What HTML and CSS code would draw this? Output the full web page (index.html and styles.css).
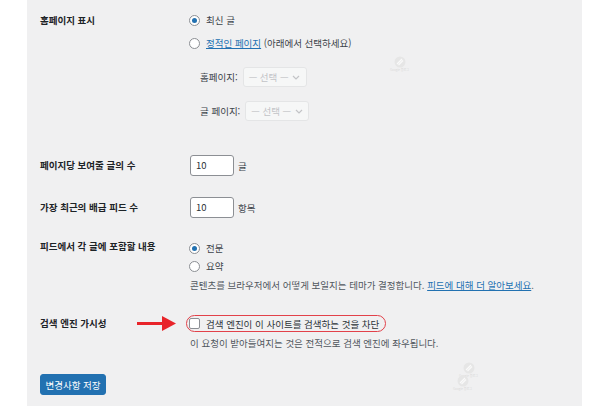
FILE: index.html
```html
<!DOCTYPE html>
<html lang="ko">
<head>
    <meta charset="UTF-8">
    <title>읽기 설정</title>
    <link rel="stylesheet" href="styles.css">
</head>
<body>

  <div class="panel">

    <div class="form-row">
      <div class="row-label">홈페이지 표시</div>
      <div class="row-field">
        <label class="choice"><span class="radio checked"></span>최신 글</label>
        <label class="choice choice-second"><span class="radio"></span><a href="#">정적인 페이지</a>&nbsp;(아래에서 선택하세요)</label>
        <ul class="page-select">
          <li>
            <span>홈페이지:</span>
            <span class="select">— 선택 —
              <svg width="8" height="5" viewBox="0 0 8 5"><path d="M1 1 L4 4 L7 1" fill="none" stroke="#c3c4c7" stroke-width="1.2"/></svg>
            </span>
          </li>
          <li>
            <span>글 페이지:</span>
            <span class="select">— 선택 —
              <svg width="8" height="5" viewBox="0 0 8 5"><path d="M1 1 L4 4 L7 1" fill="none" stroke="#c3c4c7" stroke-width="1.2"/></svg>
            </span>
          </li>
        </ul>
      </div>
    </div>

    <div class="form-row row-number">
      <div class="row-label">페이지당 보여줄 글의 수</div>
      <div class="row-field inline">
        <span class="number-input">10</span>
        <span class="unit">글</span>
      </div>
    </div>

    <div class="form-row row-number row-feed">
      <div class="row-label">가장 최근의 배급 피드 수</div>
      <div class="row-field inline">
        <span class="number-input">10</span>
        <span class="unit">항목</span>
      </div>
    </div>

    <div class="form-row row-content">
      <div class="row-label">피드에서 각 글에 포함할 내용</div>
      <div class="row-field">
        <label class="choice"><span class="radio checked"></span>전문</label>
        <label class="choice"><span class="radio"></span>요약</label>
        <p class="description">콘텐츠를 브라우저에서 어떻게 보일지는 테마가 결정합니다. <a href="#">피드에 대해 더 알아보세요</a>.</p>
      </div>
    </div>

    <div class="form-row row-search">
      <div class="row-label">검색 엔진 가시성</div>
      <svg class="arrow" width="40" height="17" viewBox="0 0 40 17">
        <rect x="0" y="7" width="28" height="3" fill="#e8242a"/>
        <polygon points="25,1 39,8.5 25,16" fill="#e8242a"/>
      </svg>
      <div class="row-field">
        <label class="check-wrap"><span class="checkbox"></span>검색 엔진이 이 사이트를 검색하는 것을 차단</label>
        <p class="description desc-search">이 요청이 받아들여지는 것은 전적으로 검색 엔진에 좌우됩니다.</p>
      </div>
    </div>

    <button class="save-btn">변경사항 저장</button>

    <div class="watermark wm-top">
      <svg width="12" height="12" viewBox="0 0 12 12"><circle cx="6" cy="6" r="5.5" fill="#e6e6e6"/><path d="M3 8 L8 3 M4.5 9 L9 4.5" stroke="#fafafa" stroke-width="1.2"/></svg>
      <span>Google 블로그</span>
    </div>
    <div class="watermark wm-bottom">
      <svg width="12" height="12" viewBox="0 0 12 12"><circle cx="6" cy="6" r="5.5" fill="#e6e6e6"/><path d="M3 8 L8 3 M4.5 9 L9 4.5" stroke="#fafafa" stroke-width="1.2"/></svg>
      <span>Google 블로그</span>
    </div>
    <div class="watermark wm-bottom2">
      <svg width="12" height="12" viewBox="0 0 12 12"><circle cx="6" cy="6" r="5.5" fill="#e6e6e6"/><path d="M3 8 L8 3 M4.5 9 L9 4.5" stroke="#fafafa" stroke-width="1.2"/></svg>
      <span>Google 블로그</span>
    </div>

  </div>

</body>
</html>
```

FILE: styles.css
```css
body {
    margin: 0;
    background-color: #fff;
    font-family: "Noto Sans CJK KR", "Noto Sans", sans-serif;
    font-size: 9.5px;
    color: #3c434a;
}

.panel {
    position: relative;
    box-sizing: border-box;
    margin-left: 27px;
    width: 555px;
    height: 406px;
    padding: 10px 0 0 13px;
    background-color: #f0f0f1;
}

a {
    color: #2271b1;
    text-decoration: underline;
}

.form-row {
    display: flex;
}

.row-label {
    width: 150px;
    flex-shrink: 0;
    font-weight: bold;
    color: #1d2327;
    line-height: 20px;
}

.row-field {
    flex: 1;
}

.choice {
    display: flex;
    align-items: center;
    height: 20px;
}

.choice-second {
    margin-top: 3px;
}

.radio {
    box-sizing: border-box;
    width: 11px;
    height: 11px;
    margin: 0 6px 0 -1px;
    border: 1px solid #8c8f94;
    border-radius: 50%;
    background-color: #fff;
    display: flex;
    align-items: center;
    justify-content: center;
}

.radio.checked::after {
    content: "";
    width: 5px;
    height: 5px;
    border-radius: 50%;
    background-color: #2271b1;
}

.page-select {
    list-style: none;
    margin: 14px 0 0;
    padding: 0 0 0 10px;
}

.page-select li {
    display: flex;
    align-items: center;
    gap: 5px;
    height: 20px;
}

.page-select li + li {
    margin-top: 14px;
}

.select {
    box-sizing: border-box;
    display: flex;
    align-items: center;
    gap: 4px;
    width: 64px;
    height: 20px;
    padding: 0 5px;
    border: 1px solid #e4e5e6;
    border-radius: 3px;
    background-color: #f6f7f7;
    color: #c3c4c7;
    white-space: nowrap;
}

.row-number {
    margin-top: 34px;
}

.row-number .row-label {
    line-height: 21px;
}

.row-feed {
    margin-top: 21px;
}

.inline {
    display: flex;
    align-items: center;
}

.number-input {
    box-sizing: border-box;
    width: 44px;
    height: 21px;
    padding-left: 5px;
    line-height: 19px;
    border: 1px solid #8c8f94;
    border-radius: 3px;
    background-color: #fff;
    color: #2c3338;
}

.unit {
    margin-left: 4px;
}

.row-content {
    margin-top: 21px;
}

.row-content .row-label {
    line-height: 14px;
}

.row-content .choice {
    height: 18px;
}

.description {
    margin: 1px 0 0;
    line-height: 18px;
    color: #50575e;
}

.row-search {
    position: relative;
    margin-top: 21px;
}

.row-search .row-label {
    line-height: 17px;
}

.arrow {
    position: absolute;
    left: 97px;
    top: 0;
}

.check-wrap {
    box-sizing: border-box;
    display: inline-flex;
    align-items: center;
    height: 17px;
    margin-left: -4px;
    padding: 0 6px 0 2px;
    border: 1.5px solid #e2414a;
    border-radius: 9px;
    color: #2c3338;
}

.checkbox {
    box-sizing: border-box;
    width: 11px;
    height: 11px;
    margin-right: 6px;
    border: 1px solid #8c8f94;
    border-radius: 2px;
    background-color: #fff;
}

.desc-search {
    margin-top: 2px;
}

.save-btn {
    display: block;
    margin-top: 22px;
    width: 66px;
    height: 21px;
    padding: 0;
    border: 1px solid #2271b1;
    border-radius: 3px;
    background-color: #2271b1;
    color: #fff;
    font-family: inherit;
    font-size: 9.5px;
    cursor: pointer;
}

.watermark {
    position: absolute;
    display: flex;
    flex-direction: column;
    align-items: center;
    font-size: 3px;
    color: #dadada;
}

.wm-top {
    left: 363px;
    top: 56px;
}

.wm-bottom {
    left: 432px;
    top: 362px;
}

.wm-bottom2 {
    left: 426px;
    top: 375px;
}
```
